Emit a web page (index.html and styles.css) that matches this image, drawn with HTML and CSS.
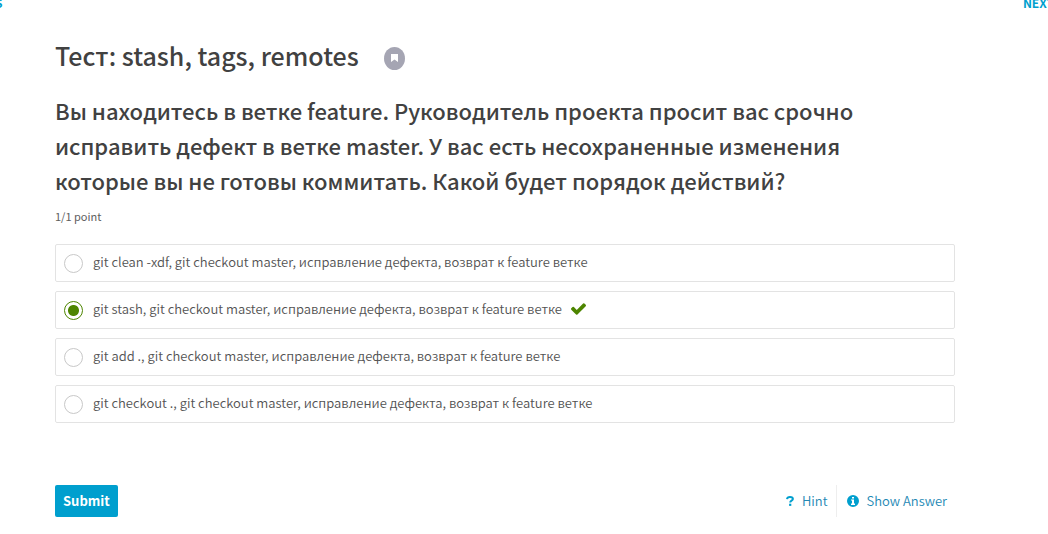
FILE: index.html
```html
<!DOCTYPE html>
<html lang="ru">
<head>
<meta charset="utf-8">
<title>Тест: stash, tags, remotes</title>
<link rel="stylesheet" href="styles.css">
</head>
<body>
<nav class="sequence-nav" aria-label="Unit">
  <a class="nav-link" href="#previous">PREVIOUS</a>
  <a class="nav-link" href="#next">NEXT</a>
</nav>
<main class="unit">
  <header class="unit-header">
    <h1 class="unit-title">Тест: stash, tags, remotes</h1>
    <button class="bookmark" type="button" aria-label="Bookmark this page">
      <svg class="bookmark-icon" viewBox="0 0 7 8" aria-hidden="true"><path d="M0 0h7v8L3.500 5.500 0 8z"/></svg>
    </button>
  </header>
  <h2 class="question">Вы находитесь в ветке feature. Руководитель проекта просит вас срочно исправить дефект в ветке master. У вас есть несохраненные изменения которые вы не готовы коммитать. Какой будет порядок действий?</h2>
  <p class="points">1/1 point</p>
  <form class="problem">
    <div class="choices" role="radiogroup" aria-label="Варианты ответа">
      <label class="choice"><input class="radio" type="radio" name="answer"><span>git clean -xdf, git checkout master, исправление дефекта, возврат к feature ветке</span></label>
      <label class="choice"><input class="radio" type="radio" name="answer" checked><span>git stash, git checkout master, исправление дефекта, возврат к feature ветке</span>
        <svg class="check-icon" viewBox="121 334 1550 1188" role="img" aria-label="correct"><path d="M1671 566q0 40-28 68l-724 724-136 136q-28 28-68 28t-68-28l-136-136-362-362q-28-28-28-68t28-68l136-136q28-28 68-28t68 28l294 295 656-657q28-28 68-28t68 28l136 136q28 28 28 68z"/></svg>
      </label>
      <label class="choice"><input class="radio" type="radio" name="answer"><span>git add ., git checkout master, исправление дефекта, возврат к feature ветке</span></label>
      <label class="choice"><input class="radio" type="radio" name="answer"><span>git checkout ., git checkout master, исправление дефекта, возврат к feature ветке</span></label>
    </div>
    <div class="actions">
      <button class="submit" type="button">Submit</button>
      <div class="help">
        <button class="help-button" type="button">
          <svg class="hint-icon" viewBox="0 0 8 10" aria-hidden="true"><path d="M1 3.200C1.200 1.600 2.300 1 4 1s2.900.8 2.900 2.100C6.900 4.700 4.200 4.700 4.200 6.400" fill="none" stroke="currentColor" stroke-width="2"/><path d="M3.100 7.700h2.200v2.200H3.100z"/></svg>
          <span>Hint</span>
        </button>
        <button class="help-button" type="button">
          <svg class="info-icon" viewBox="0 0 12 12" aria-hidden="true"><path fill-rule="evenodd" d="M6 0a6 6 0 1 1 0 12A6 6 0 0 1 6 0zM5 2v1.500h2V2zM4 4.500v1h1v3H4v1.500h4V8.500H7v-4z"/></svg>
          <span>Show Answer</span>
        </button>
      </div>
    </div>
  </form>
</main>
</body>
</html>
```

FILE: styles.css
```css
* {
  box-sizing: border-box;
}

body {
  margin: 0;
  overflow: hidden;
  background: #fff;
  color: #414141;
  font-family: "Noto Sans CJK SC", "Noto Sans", sans-serif;
}

button {
  border: 0;
  padding: 0;
  font: inherit;
  cursor: pointer;
}

svg {
  flex: none;
  fill: currentColor;
}

.sequence-nav {
  display: flex;
  justify-content: space-between;
  height: 12px;
  margin: 0 -6px 0 -58px;
}

.nav-link {
  margin-top: -7px;
  color: #009fce;
  font-size: 12px;
  font-weight: 700;
  line-height: 20px;
  text-decoration: none;
}

.unit {
  max-width: 1010px;
  padding: 25px 55px 16px;
}

.unit-header {
  display: flex;
  align-items: center;
  gap: 25px;
}

.unit-title {
  margin: 0;
  font-size: 25px;
  font-weight: 500;
  line-height: 36px;
}

.bookmark {
  display: flex;
  align-items: center;
  justify-content: center;
  width: 21px;
  height: 23px;
  margin-top: 6px;
  border-radius: 50%;
  background: #a5a5b3;
  color: #fff;
}

.bookmark-icon {
  width: 7px;
  height: 8px;
}

.question {
  max-width: 860px;
  margin: 20px 0 0;
  font-size: 22px;
  font-weight: 500;
  line-height: 35px;
}

.points {
  margin: 8px 0 0;
  color: #5e5e5e;
  font-size: 11px;
  line-height: 20px;
}

.choices {
  display: grid;
  gap: 9px;
  margin-top: 18px;
}

.choice {
  display: flex;
  align-items: center;
  min-height: 38px;
  padding: 0 8px 2px;
  border: 1px solid #e3e3e3;
  border-radius: 2px;
  color: #535353;
  font-size: 13px;
  font-weight: 350;
  line-height: 20px;
}

.radio {
  appearance: none;
  flex: none;
  width: 19px;
  height: 19px;
  margin: 3px 10px 0 0;
  border: 1px solid #c8c8c8;
  border-radius: 50%;
}

.radio:checked {
  border-color: #4d8500;
  background: radial-gradient(circle, #4d8500 5px, #fff 6px);
}

.check-icon {
  width: 15px;
  height: 12px;
  margin-left: 9px;
  color: #4d8500;
}

.actions {
  display: flex;
  align-items: center;
  justify-content: space-between;
  margin-top: 62px;
}

.submit {
  padding: 0 8px;
  border-radius: 2px;
  background: #009fce;
  color: #fff;
  font-size: 13px;
  font-weight: 700;
  line-height: 32px;
}

.help {
  display: flex;
}

.help-button {
  display: flex;
  align-items: center;
  gap: 8px;
  padding: 0 8px;
  background: none;
  color: #2388b4;
  font-size: 13px;
  font-weight: 350;
  line-height: 32px;
}

.help-button + .help-button {
  padding-left: 10px;
  border-left: 1px solid #eee;
}

.hint-icon {
  width: 8px;
  height: 10px;
  color: #009fce;
}

.info-icon {
  width: 12px;
  height: 12px;
  color: #009fce;
}
```
